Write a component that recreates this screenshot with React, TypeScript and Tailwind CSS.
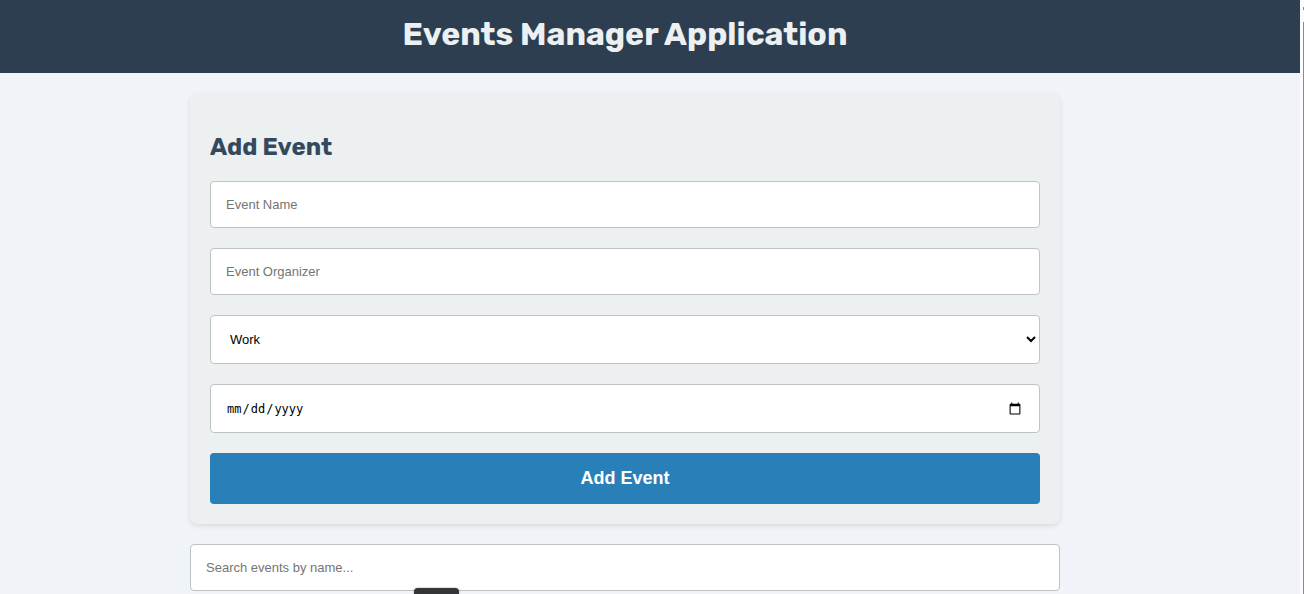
import { useState } from "react";
import type { FormEvent } from "react";

const fieldBase =
  "block w-full rounded border border-[#bdc3c7] bg-white font-['Liberation_Sans',Arial,sans-serif] text-[13px] leading-[15px]";
const textField = `${fieldBase} h-[47px] px-[15px] placeholder:text-[#757575]`;

const categories = ["Work", "Personal", "Social", "Other"];

function Header() {
  return (
    <header className="bg-[#2c3e50] pt-[15px] pb-5 pr-[50px] text-center text-[#ecf0f1]">
      <h1 className="font-['Rubik','Inter',sans-serif] text-[32px] leading-[38px] font-bold">
        Events Manager Application
      </h1>
    </header>
  );
}

function EventForm() {
  const [name, setName] = useState("");
  const [organizer, setOrganizer] = useState("");
  const [category, setCategory] = useState("Work");
  const [date, setDate] = useState("");

  const submit = (e: FormEvent) => {
    e.preventDefault();
    setName("");
    setOrganizer("");
    setDate("");
  };

  return (
    <form
      onSubmit={submit}
      className="flex flex-col gap-5 rounded-lg bg-[#ecf0f1] p-5 pt-10 shadow-[0_2px_5px_rgba(0,0,0,0.1)]"
    >
      <h2 className="font-['Rubik','Inter',sans-serif] text-2xl leading-7 font-bold text-[#34495e]">
        Add Event
      </h2>
      <input
        type="text"
        aria-label="Event Name"
        placeholder="Event Name"
        value={name}
        onChange={(e) => setName(e.target.value)}
        className={textField}
      />
      <input
        type="text"
        aria-label="Event Organizer"
        placeholder="Event Organizer"
        value={organizer}
        onChange={(e) => setOrganizer(e.target.value)}
        className={textField}
      />
      <select
        aria-label="Category"
        value={category}
        onChange={(e) => setCategory(e.target.value)}
        className={`${fieldBase} h-[49px] pl-[15px] text-black`}
      >
        {categories.map((c) => (
          <option key={c}>{c}</option>
        ))}
      </select>
      <input
        type="date"
        aria-label="Event date"
        value={date}
        onChange={(e) => setDate(e.target.value)}
        className="block h-[49px] w-full rounded border border-[#bdc3c7] bg-white px-[15px] font-['DejaVu_Sans_Mono',monospace] text-xs text-black [&::-webkit-calendar-picker-indicator]:size-[14px]"
      />
      <button
        type="submit"
        className="h-[51px] rounded bg-[#2980b9] pb-0.5 font-['Liberation_Sans',Arial,sans-serif] text-lg font-bold text-white"
      >
        Add Event
      </button>
    </form>
  );
}

export default function App() {
  const [query, setQuery] = useState("");
  return (
    <div className="flex h-screen overflow-hidden bg-[#f0f4f8]">
      <div className="min-w-0 flex-1">
        <Header />
        <main className="pr-[50px]">
          <div className="mx-auto flex max-w-[870px] flex-col gap-5 pt-5">
            <EventForm />
            <input
              type="search"
              aria-label="Search events by name"
              placeholder="Search events by name..."
              value={query}
              onChange={(e) => setQuery(e.target.value)}
              className={textField}
            />
          </div>
        </main>
      </div>
      <div className="flex w-1 flex-col items-end bg-[#fcfcfc] pt-[7px]">
        <div className="h-[3px] w-px bg-[#8b8b8b]" />
        <div className="mt-3 w-px flex-1 bg-[#8b8b8b]" />
      </div>
      <div className="absolute bottom-0 left-[414px] h-1.5 w-[45px] rounded-t bg-[#323639] shadow-[0_0_2px_rgba(0,0,0,0.4)]" />
    </div>
  );
}
